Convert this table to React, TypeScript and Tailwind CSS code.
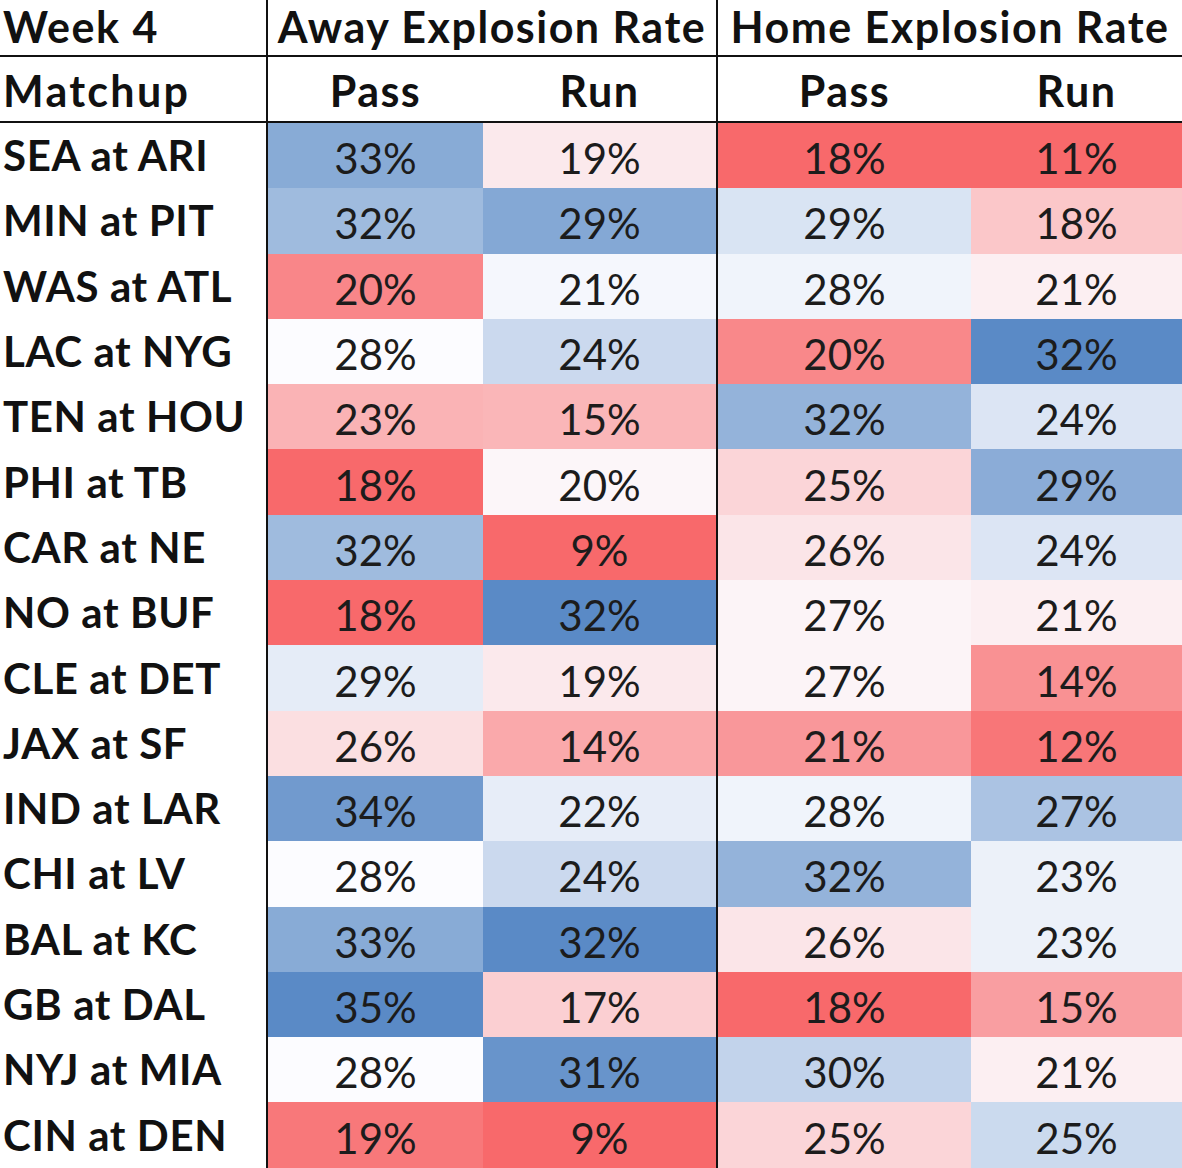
import React from "react";

type Row = { matchup: string; vals: number[] };

const rows: Row[] = [
  { matchup: "SEA at ARI", vals: [33, 19, 18, 11] },
  { matchup: "MIN at PIT", vals: [32, 29, 29, 18] },
  { matchup: "WAS at ATL", vals: [20, 21, 28, 21] },
  { matchup: "LAC at NYG", vals: [28, 24, 20, 32] },
  { matchup: "TEN at HOU", vals: [23, 15, 32, 24] },
  { matchup: "PHI at TB", vals: [18, 20, 25, 29] },
  { matchup: "CAR at NE", vals: [32, 9, 26, 24] },
  { matchup: "NO at BUF", vals: [18, 32, 27, 21] },
  { matchup: "CLE at DET", vals: [29, 19, 27, 14] },
  { matchup: "JAX at SF", vals: [26, 14, 21, 12] },
  { matchup: "IND at LAR", vals: [34, 22, 28, 27] },
  { matchup: "CHI at LV", vals: [28, 24, 32, 23] },
  { matchup: "BAL at KC", vals: [33, 32, 26, 23] },
  { matchup: "GB at DAL", vals: [35, 17, 18, 15] },
  { matchup: "NYJ at MIA", vals: [28, 31, 30, 21] },
  { matchup: "CIN at DEN", vals: [19, 9, 25, 25] },
];

const RED = [248, 105, 107];
const MID = [252, 252, 255];
const BLUE = [90, 138, 198];

const mix = (a: number[], b: number[], t: number) =>
  `rgb(${a.map((v, i) => Math.round(v + (b[i] - v) * t)).join(",")})`;

// excel style 3 colour scale, one per column (home pass scale is wider, the raw numbers had decimals)
const scales = [
  { min: 18, med: 28, max: 35 },
  { min: 9, med: 20.5, max: 32 },
  { min: 18, med: 27.5, max: 34.5 },
  { min: 11, med: 22, max: 32 },
];

const heat = (c: number, v: number) => {
  const { min, med, max } = scales[c];
  const t = v <= med ? (v - min) / (med - min) : (v - med) / (max - med);
  const k = Math.max(0, Math.min(1, t));
  return v <= med ? mix(RED, MID, k) : mix(MID, BLUE, k);
};

const font = { fontFamily: "Lato, 'Open Sans', sans-serif" };

const head = "text-[43px] font-bold tracking-[1.5px]";

const App = () => {
  return (
    <div
      className="grid w-[1182px] bg-white text-[#111] grid-cols-[266px_217px_233px_255px_211px] grid-rows-[57px_66px_repeat(16,65.3px)]"
      style={font}
    >
      <div className={`flex items-center border-b-2 border-[#111] pl-[3px] ${head}`}>Week 4</div>
      <div className={`col-span-2 flex items-center justify-center border-b-2 border-l-2 border-[#111] ${head}`}>
        Away Explosion Rate
      </div>
      <div className={`col-span-2 flex items-center justify-center border-b-2 border-l-2 border-[#111] ${head}`}>
        Home Explosion Rate
      </div>

      <div className={`flex items-center border-b-2 border-[#111] pl-[3px] pt-[5px] tracking-[2.3px] ${head}`}>
        Matchup
      </div>
      <div className={`flex items-center justify-center border-b-2 border-l-2 border-[#111] pt-[5px] ${head}`}>Pass</div>
      <div className={`flex items-center justify-center border-b-2 border-[#111] pt-[5px] ${head}`}>Run</div>
      <div className={`flex items-center justify-center border-b-2 border-l-2 border-[#111] pt-[5px] ${head}`}>Pass</div>
      <div className={`flex items-center justify-center border-b-2 border-[#111] pt-[5px] ${head}`}>Run</div>

      {rows.map((r) => (
        <React.Fragment key={r.matchup}>
          <div className="flex items-center pl-[3px] text-[42px] font-bold tracking-[0.6px]">{r.matchup}</div>
          {r.vals.map((v, c) => (
            <div
              key={c}
              className={`flex items-center justify-center pt-[6px] text-[42px] text-[#1c1c1c] ${
                c % 2 === 0 ? "border-l-2 border-[#111]" : ""
              }`}
              style={{ backgroundColor: heat(c, v) }}
            >
              {v}%
            </div>
          ))}
        </React.Fragment>
      ))}
    </div>
  );
};

export default App;
